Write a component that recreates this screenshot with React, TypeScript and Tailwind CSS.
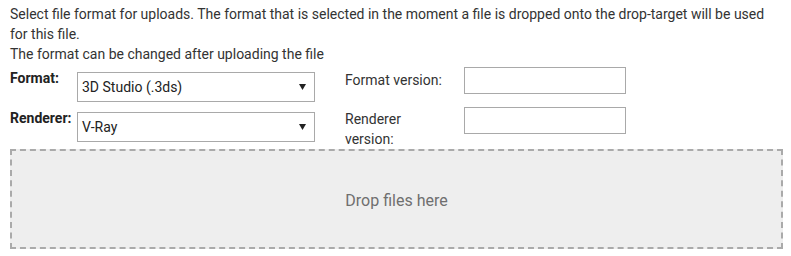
import React from "react";

function Arrow() {
  return (
    <svg width="7" height="6" viewBox="0 0 7 6" className="absolute right-[8px] top-[11px]">
      <path d="M0 0 H7 L3.5 6 Z" fill="#222" />
    </svg>
  );
}

function Select({ value }: { value: string }) {
  return (
    <div className="relative w-[238px] h-[30px] border border-[#a9a9a9] bg-white pl-[4px] flex items-center text-[14px] leading-[20px] text-[#222]">
      <span>{value}</span>
      <Arrow />
    </div>
  );
}

export default function App() {
  return (
    <div
      className="w-[791px] h-[256px] bg-white px-[10px] pt-[4px] text-[14px] leading-[20px] text-[#333]"
      style={{ fontFamily: "Roboto, 'Noto Sans', sans-serif" }}
    >
      <p>
        Select file format for uploads. The format that is selected in the moment a file is dropped onto the drop-target will be used
        for this file.
      </p>
      <p>The format can be changed after uploading the file</p>

      <div className="flex items-start h-[40px]">
        <div className="w-[67px] font-bold text-[#222] mt-[4px]">Format:</div>
        <div className="mt-[8px]">
          <Select value="3D Studio (.3ds)" />
        </div>
        <div className="w-[119px] ml-[30px] mt-[6px]">Format version:</div>
        <div className="w-[162px] h-[27px] border border-[#a9a9a9] bg-white mt-[3px]" />
      </div>

      <div className="flex items-start h-[45px]">
        <div className="w-[67px] font-bold text-[#222] mt-[4px]">Renderer:</div>
        <div className="mt-[8px]">
          <Select value="V-Ray" />
        </div>
        <div className="w-[119px] ml-[30px] mt-[5px]">
          Renderer
          <br />
          version:
        </div>
        <div className="w-[162px] h-[27px] border border-[#a9a9a9] bg-white mt-[3px]" />
      </div>

      <div className="w-[773px] h-[100px] border-2 border-dashed border-[#aaaaaa] bg-[#eeeeee] flex items-center justify-center text-[16px] leading-[20px] text-[#6f6f6f]">
        <span className="mt-[3px]">Drop files here</span>
      </div>
    </div>
  );
}
